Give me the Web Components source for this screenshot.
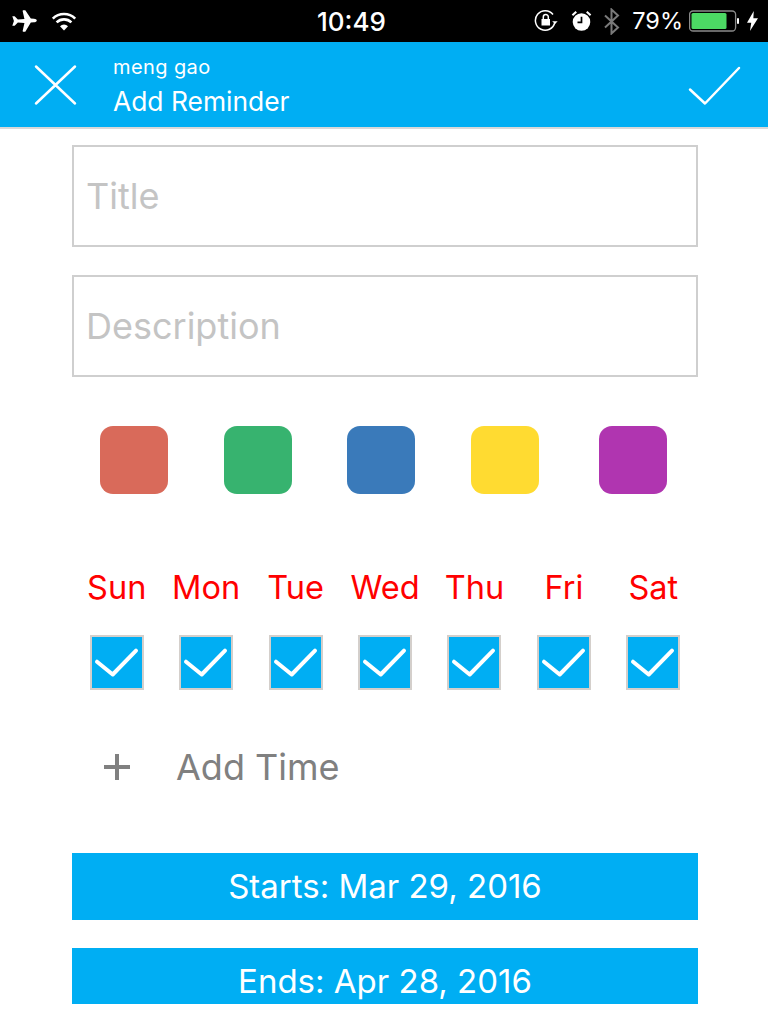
<!DOCTYPE html>
<html>
<head>
<meta charset="utf-8">
<title>Add Reminder</title>
<style>
  html, body { margin: 0; height: 1024px; overflow: hidden; background: #fff; }
  body { font-family: Inter, "Noto Sans", "Liberation Sans", sans-serif; }
</style>
</head>
<body>
<reminder-screen>
  <status-bar slot="status"></status-bar>
  <app-header slot="header" subtitle="meng gao" heading="Add Reminder"></app-header>
  <text-field placeholder="Title"></text-field>
  <text-field placeholder="Description"></text-field>
  <color-row></color-row>
  <day-picker></day-picker>
  <add-time>Add Time</add-time>
  <date-button>Starts: Mar 29, 2016</date-button>
  <date-button>Ends: Apr 28, 2016</date-button>
</reminder-screen>

<script>
class StatusBar extends HTMLElement {
  constructor() {
    super();
    this.attachShadow({ mode: 'open' }).innerHTML = `
      <style>
        :host { display: flex; align-items: center; height: 42px; background: #000; color: #fff; padding: 0 10px 0 12px; box-sizing: border-box; }
        .side { display: flex; align-items: center; }
        .right { margin-left: auto; }
        .time { margin-left: 240px; font-size: 26px; font-weight: 500; line-height: 28px; margin-top: 2px; }
        .pct { font-size: 23.500px; line-height: 28px; margin-left: 12px; }
        svg { display: block; flex: none; }
      </style>
      <div class="side">
        <svg width="25" height="24" viewBox="3.500 0 23.500 22" fill="#fff"><path d="M16 1h-2.200l-.3.600 1.700 7.600-6.200.500L6 6.600H3.800L5.300 11 3.800 15.400H6l3-3.100 6.200.500-1.700 7.600.3.600H16l5.200-8.700 3-.1c1.300 0 2.600-.7 2.600-1.700s-1.300-1.700-2.600-1.700l-3-.1z"/></svg>
        <svg style="margin-left:14px" width="26" height="20" viewBox="0 0 26 20" fill="none" stroke="#fff" stroke-width="2.600"><path d="M1.800 7.600a16 16 0 0 1 22.400 0"/><path d="M5.600 11.400a10.600 10.600 0 0 1 14.800 0"/><path d="M13 19.500l-4-4.300a5.600 5.600 0 0 1 8 0z" fill="#fff" stroke="none"/></svg>
      </div>
      <div class="time">10:49</div>
      <div class="side right">
        <svg width="24" height="24" viewBox="0 0 24 24" fill="none" stroke="#fff" stroke-width="1.500"><path d="M20.800 13.500A9.800 9.800 0 1 1 19 5.500"/><path d="M18.200 12.200l2.800 2.800 2.700-2.800" fill="#fff" stroke="none"/><rect x="7.500" y="10" width="8.500" height="6.500" fill="#fff" stroke="none"/><path d="M9.300 10V8a2.500 2.500 0 0 1 5 0v2"/></svg>
        <svg style="margin-left:13px" width="21" height="22" viewBox="0 0 22 23"><circle cx="11" cy="12.500" r="9.200" fill="#fff"/><path d="M11 7v6H6.800" fill="none" stroke="#000" stroke-width="1.800"/><path d="M1.500 5.500L5.500 1.800M20.500 5.500L16.500 1.800" stroke="#fff" stroke-width="2.200"/></svg>
        <svg style="margin-left:11px" width="17" height="27" viewBox="0 0 17 27" fill="none" stroke="#7a7a7a" stroke-width="2"><path d="M2 7.500l13 12-6.500 6V1.500l6.500 6-13 12"/></svg>
        <span class="pct">79%</span>
        <svg style="margin-left:6px" width="50" height="22" viewBox="0 0 50 22"><rect x=".6" y="1" width="46" height="20" rx="3.500" fill="none" stroke="#8a8a8a" stroke-width="1.300"/><rect x="2.500" y="3" width="35" height="16" rx="1.500" fill="#4cd964"/><rect x="48" y="8" width="2" height="6" rx="1" fill="#fff"/></svg>
        <svg style="margin-left:8px" width="11" height="20" viewBox="0 0 13 22" preserveAspectRatio="none" fill="#fff"><path d="M8 0L0 13h5l-1.500 9L13 8H7.500z"/></svg>
      </div>`;
  }
}

class AppHeader extends HTMLElement {
  constructor() {
    super();
    this.attachShadow({ mode: 'open' }).innerHTML = `
      <style>
        :host { display: flex; align-items: center; height: 85px; background: #00aef3; color: #fff; border-bottom: 2px solid #d9d9d9; padding: 0 26px 0 34px; }
        .titles { margin-left: 35px; flex: 1; padding-top: 2px; }
        .sub { font-size: 20px; letter-spacing: .4px; line-height: 24px; }
        .main { font-size: 26.400px; line-height: 32px; margin-top: 6px; }
        svg { display: block; flex: none; }
      </style>
      <svg width="44" height="44" viewBox="0 0 44 44" fill="none" stroke="#fff" stroke-width="2.500" stroke-linecap="round"><path d="M2 3.500l39 37M41 3.500L2 40.500"/></svg>
      <div class="titles"><div class="sub"></div><div class="main"></div></div>
      <svg width="54" height="42" viewBox="0 0 54 42" fill="none" stroke="#fff" stroke-width="2.500" stroke-linecap="round" stroke-linejoin="round"><path d="M2 25.500l15 14L51 4"/></svg>`;
    this.shadowRoot.querySelector('.sub').textContent = this.getAttribute('subtitle');
    this.shadowRoot.querySelector('.main').textContent = this.getAttribute('heading');
  }
}

class TextField extends HTMLElement {
  constructor() {
    super();
    this.attachShadow({ mode: 'open' }).innerHTML = `
      <style>
        :host { display: flex; align-items: center; box-sizing: border-box; height: 102px; border: 2px solid #cfcfcf; padding: 0 12px; color: #c4c4c4; font-size: 36px; }
      </style>
      <span></span>`;
    this.shadowRoot.querySelector('span').textContent = this.getAttribute('placeholder');
  }
}

class ColorRow extends HTMLElement {
  constructor() {
    super();
    const colors = ['#d96a5a', '#37b36f', '#3a7aba', '#ffdb31', '#b035b0'];
    this.attachShadow({ mode: 'open' }).innerHTML = `
      <style>
        :host { display: flex; gap: 55.500px; padding-left: 28px; }
        i { display: block; width: 68px; height: 68px; border-radius: 13px; }
        i:last-child { margin-left: 4.500px; }
      </style>
      ${colors.map(c => `<i style="background:${c}"></i>`).join('')}`;
  }
}

class DayPicker extends HTMLElement {
  constructor() {
    super();
    const days = ['Sun', 'Mon', 'Tue', 'Wed', 'Thu', 'Fri', 'Sat'];
    this.attachShadow({ mode: 'open' }).innerHTML = `
      <style>
        :host { display: grid; grid-template-columns: repeat(7, 1fr); row-gap: 29px; justify-items: center; }
        span { color: #ff0000; font-size: 32.500px; line-height: 36px; }
        b { display: block; box-sizing: border-box; width: 54px; height: 55px; background: #00aef3; border: 2px solid #d4cfcb; }
        svg { display: block; }
      </style>
      ${days.map(d => `<span>${d}</span>`).join('')}
      ${days.map(() => `<b><svg width="50" height="51" viewBox="2 2 50 51" fill="none" stroke="#fff" stroke-width="4" stroke-linecap="round" stroke-linejoin="round"><path d="M7 26.700l15.700 12.800L46 15.700"/></svg></b>`).join('')}`;
  }
}

class AddTime extends HTMLElement {
  constructor() {
    super();
    this.attachShadow({ mode: 'open' }).innerHTML = `
      <style>
        :host { display: flex; align-items: center; color: #808080; font-size: 36px; line-height: 40px; padding-left: 30px; }
        svg { display: block; margin-right: 44px; }
      </style>
      <svg width="30" height="30" viewBox="0 0 30 30" fill="none" stroke="#808080" stroke-width="4"><path d="M15 2v26M2 15h26"/></svg>
      <slot></slot>`;
  }
}

class DateButton extends HTMLElement {
  constructor() {
    super();
    this.attachShadow({ mode: 'open' }).innerHTML = `
      <style>
        :host { display: flex; align-items: center; justify-content: center; box-sizing: border-box; height: 67px; padding-bottom: 2px; background: #00aef3; color: #fff; font-size: 33px; }
      </style>
      <slot></slot>`;
  }
}

class ReminderScreen extends HTMLElement {
  constructor() {
    super();
    this.attachShadow({ mode: 'open' }).innerHTML = `
      <style>
        :host { display: block; height: 1024px; background: #fff; }
        .scroll { height: 875px; overflow: hidden; padding: 16px 70px 0 72px; box-sizing: border-box; }
        ::slotted(text-field) { margin-bottom: 28px; }
        ::slotted(color-row) { margin: 49px 0 76px; }
        ::slotted(add-time) { margin-top: 57px; margin-bottom: 66px; }
        ::slotted(date-button) { margin-bottom: 28px; }
      </style>
      <slot name="status"></slot>
      <slot name="header"></slot>
      <div class="scroll"><slot></slot></div>`;
  }
}

customElements.define('status-bar', StatusBar);
customElements.define('app-header', AppHeader);
customElements.define('text-field', TextField);
customElements.define('color-row', ColorRow);
customElements.define('day-picker', DayPicker);
customElements.define('add-time', AddTime);
customElements.define('date-button', DateButton);
customElements.define('reminder-screen', ReminderScreen);
</script>
</body>
</html>
